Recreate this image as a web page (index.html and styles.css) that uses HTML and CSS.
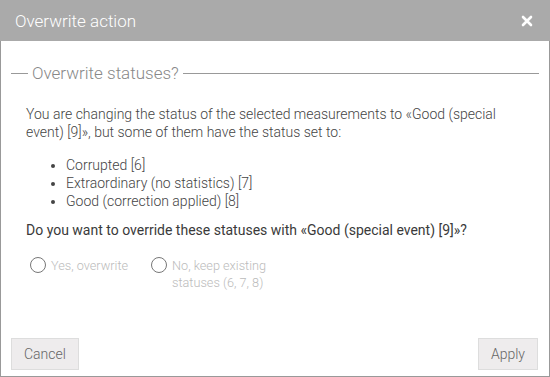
FILE: index.html
```html
<!DOCTYPE html>
<html>
<head>
<meta charset="utf-8">
<link rel="stylesheet" href="styles.css">
</head>
<body>
<div class="dialog">
  <div class="header">
    <span class="title">Overwrite action</span>
    <span class="close"><svg width="12" height="12" viewBox="0 0 12 12"><path d="M2 2 L10 10 M10 2 L2 10" stroke="#fff" stroke-width="2.6" stroke-linecap="round"/></svg></span>
  </div>
  <div class="content">
    <fieldset class="group">
      <legend>Overwrite statuses?</legend>
      <p class="intro">You are changing the status of the selected measurements to «Good (special event) [9]», but some of them have the status set to:</p>
      <ul class="list">
        <li>Corrupted [6]</li>
        <li>Extraordinary (no statistics) [7]</li>
        <li>Good (correction applied) [8]</li>
      </ul>
      <p class="question">Do you want to override these statuses with «Good (special event) [9]»?</p>
      <div class="radios">
        <label class="radio"><span class="circle"></span><span class="rlabel">Yes, overwrite</span></label>
        <label class="radio"><span class="circle"></span><span class="rlabel rwide">No, keep existing statuses (6, 7, 8)</span></label>
      </div>
    </fieldset>
  </div>
  <div class="footer">
    <button class="btn">Cancel</button>
    <button class="btn">Apply</button>
  </div>
</div>
</body>
</html>
```
FILE: styles.css
```css
html, body { margin: 0; padding: 0; }
body {
  font-family: Roboto, "Liberation Sans", sans-serif;
  font-weight: 300;
  width: 550px;
  height: 377px;
  overflow: hidden;
  background: #fff;
}
.dialog {
  width: 550px;
  height: 377px;
  box-sizing: border-box;
  display: flex;
  flex-direction: column;
}
.header {
  height: 41px;
  background: #aaaaaa;
  display: flex;
  align-items: center;
  justify-content: space-between;
  padding: 0 17px 0 15px;
  flex: none;
}
.title {
  color: #fff;
  font-size: 17px;
  font-weight: 300;
}
.close { display: flex; width: 12px; height: 12px; }
.content {
  flex: 1;
  border-left: 1px solid #999;
  border-right: 1px solid #999;
  padding: 0 10px;
}
.group {
  margin: 22px 0 0 0;
  padding: 0 0 0 15px;
  border: none;
  border-top: 1px solid #999;
  color: #444;
  font-size: 14px;
}
.group legend {
  color: #888;
  font-size: 17px;
  padding: 0 4px;
  margin-left: 2px;
}
.intro {
  margin: 22px 0 0 0;
  line-height: 18px;
  padding-right: 30px;
}
.list {
  margin: 15px 0 0 0;
  padding-left: 40px;
  line-height: 18px;
}
.question {
  margin: 11px 0 0 0;
  line-height: 18px;
  font-weight: 400;
  color: #3a3a3a;
}
.radios {
  display: flex;
  gap: 23px;
  margin-top: 18px;
  padding-left: 4px;
}
.radio {
  display: flex;
  align-items: flex-start;
  color: #bbb;
  font-size: 12.7px;
  line-height: 17px;
}
.circle {
  width: 14px;
  height: 14px;
  border: 1.6px solid #777;
  border-radius: 50%;
  margin-right: 5px;
  flex: none;
  margin-top: 0;
}
.rwide { width: 102px; }
.footer {
  height: 47px;
  flex: none;
  border: 1px solid #999;
  border-top: none;
  display: flex;
  justify-content: space-between;
  align-items: flex-end;
  padding: 0 11px 6px 10px;
  box-sizing: border-box;
}
.btn {
  font-family: Roboto, "Liberation Sans", sans-serif;
  font-weight: 300;
  font-size: 14px;
  color: #666;
  background: #eeeced;
  border: 1px solid #ddd;
  height: 32px;
  padding: 0 12px;
}
```
